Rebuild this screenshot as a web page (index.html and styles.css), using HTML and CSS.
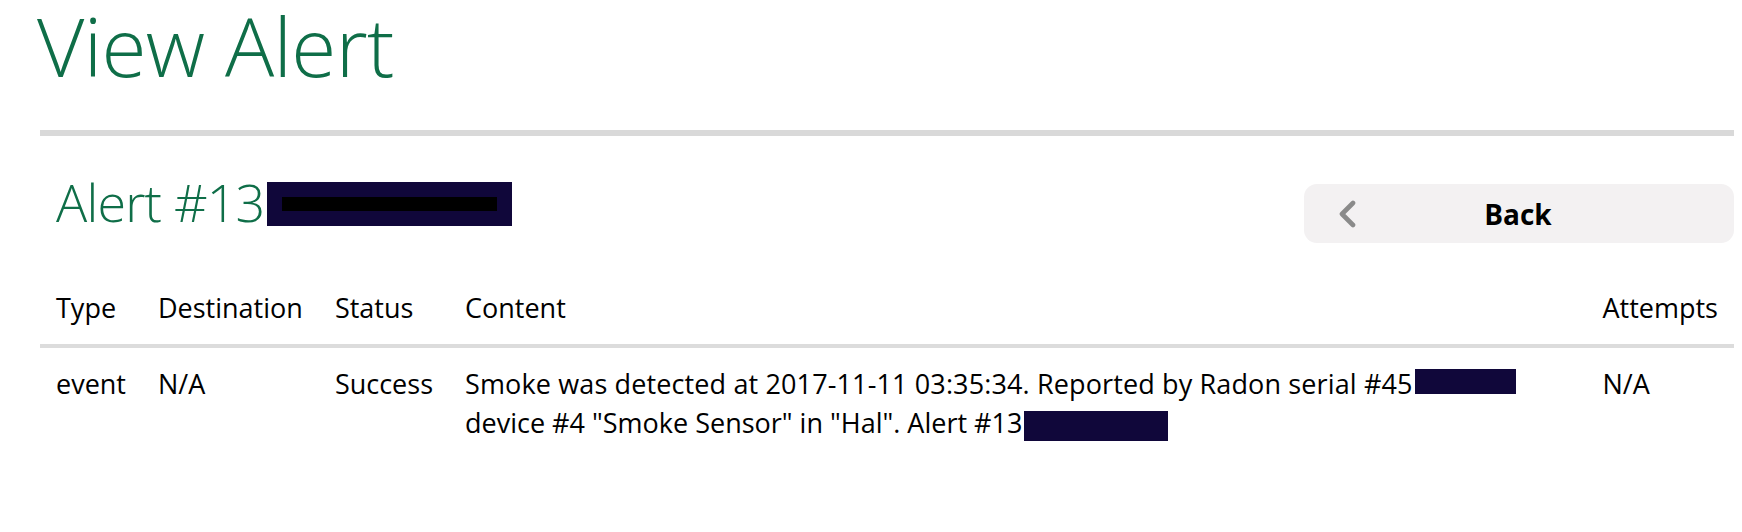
FILE: index.html
```html
<!DOCTYPE html>
<html lang="en">
<head>
<meta charset="utf-8">
<title>View Alert</title>
<link rel="stylesheet" href="styles.css">
</head>
<body>
<main class="page">
  <h1 class="page-title">View Alert</h1>
  <hr class="title-rule">
  <div class="alert-head">
    <h2 class="alert-title"><span class="alert-name">Alert #13</span><span class="redact redact-title"><span class="redact-bar"></span></span></h2>
    <button class="back-btn" type="button">
      <svg class="back-icon" width="20" height="28" viewBox="0 0 20 28" aria-hidden="true"><polyline points="15,3 4,14 15,25" fill="none" stroke="#8a8a8a" stroke-width="4.6" stroke-linecap="round" stroke-linejoin="round"/></svg>
      <span class="back-label">Back</span>
      <span></span>
    </button>
  </div>
  <table class="alert-table">
    <thead>
      <tr>
        <th>Type</th>
        <th>Destination</th>
        <th>Status</th>
        <th class="col-content">Content</th>
        <th>Attempts</th>
      </tr>
    </thead>
    <tbody>
      <tr>
        <td>event</td>
        <td>N/A</td>
        <td>Success</td>
        <td class="col-content"><span class="content-line">Smoke was detected at 2017-11-11 03:35:34. Reported by Radon serial #45</span><span class="redact redact-serial"></span> device #4 "Smoke Sensor" in "Hal". Alert #13<span class="redact redact-alert"></span></td>
        <td>N/A</td>
      </tr>
    </tbody>
  </table>
</main>
</body>
</html>
```
FILE: styles.css
```css
html, body {
  margin: 0;
  padding: 0;
  background: #ffffff;
}

body {
  font-family: "Open Sans", "DejaVu Sans", sans-serif;
  color: #000000;
}

.page {
  padding: 0 8px 0 40px;
}

.page-title {
  margin: 0 0 0 -3px;
  font-size: 82px;
  line-height: 90px;
  font-weight: 300;
  letter-spacing: -0.7px;
  color: #0f6e48;
}

.title-rule {
  margin: 40px 0 0 0;
  height: 6px;
  border: 0;
  background: #d9d9d9;
}

.alert-head {
  display: flex;
  justify-content: space-between;
  align-items: flex-start;
}

.alert-title {
  display: flex;
  align-items: flex-start;
  margin: 35px 0 0 16px;
  font-size: 52px;
  line-height: 62px;
  font-weight: 300;
  letter-spacing: -0.8px;
  color: #0f6e48;
}

.redact {
  display: inline-block;
  background: #10073a;
}

.redact-title {
  display: flex;
  margin: 11px 0 0 3px;
  width: 245px;
  height: 44px;
  padding: 15px;
  box-sizing: border-box;
}

.redact-bar {
  display: block;
  width: 215px;
  height: 14px;
  background: #000000;
}

.back-btn {
  display: grid;
  grid-template-columns: 1fr auto 1fr;
  align-items: center;
  margin-top: 48px;
  width: 430px;
  height: 59px;
  padding: 0 0 0 34px;
  border: 0;
  border-radius: 13px;
  background: #f3f1f2;
  font-family: "Open Sans", "DejaVu Sans", sans-serif;
  font-size: 28px;
  font-weight: 700;
  color: #000000;
}

.back-icon {
  justify-self: start;
  filter: blur(0.5px);
}

.back-label {
  padding-right: 36px;
}

.alert-table {
  width: 100%;
  margin-top: 28px;
  border-collapse: collapse;
  font-size: 27px;
  line-height: 39px;
}

.alert-table th {
  text-align: left;
  font-weight: 400;
  padding: 17px 16px;
  border-bottom: 4px solid #dcdcdc;
  white-space: nowrap;
}

.alert-table td {
  vertical-align: top;
  padding: 16px 16px;
  white-space: nowrap;
}

.alert-table td.col-content {
  white-space: normal;
  width: 100%;
}

.content-line {
  letter-spacing: 0.13px;
}

.redact-serial {
  width: 101px;
  height: 25px;
  margin-left: 2px;
  vertical-align: baseline;
}

.redact-alert {
  width: 144px;
  height: 30px;
  margin-left: 2px;
  vertical-align: -8px;
}
```
